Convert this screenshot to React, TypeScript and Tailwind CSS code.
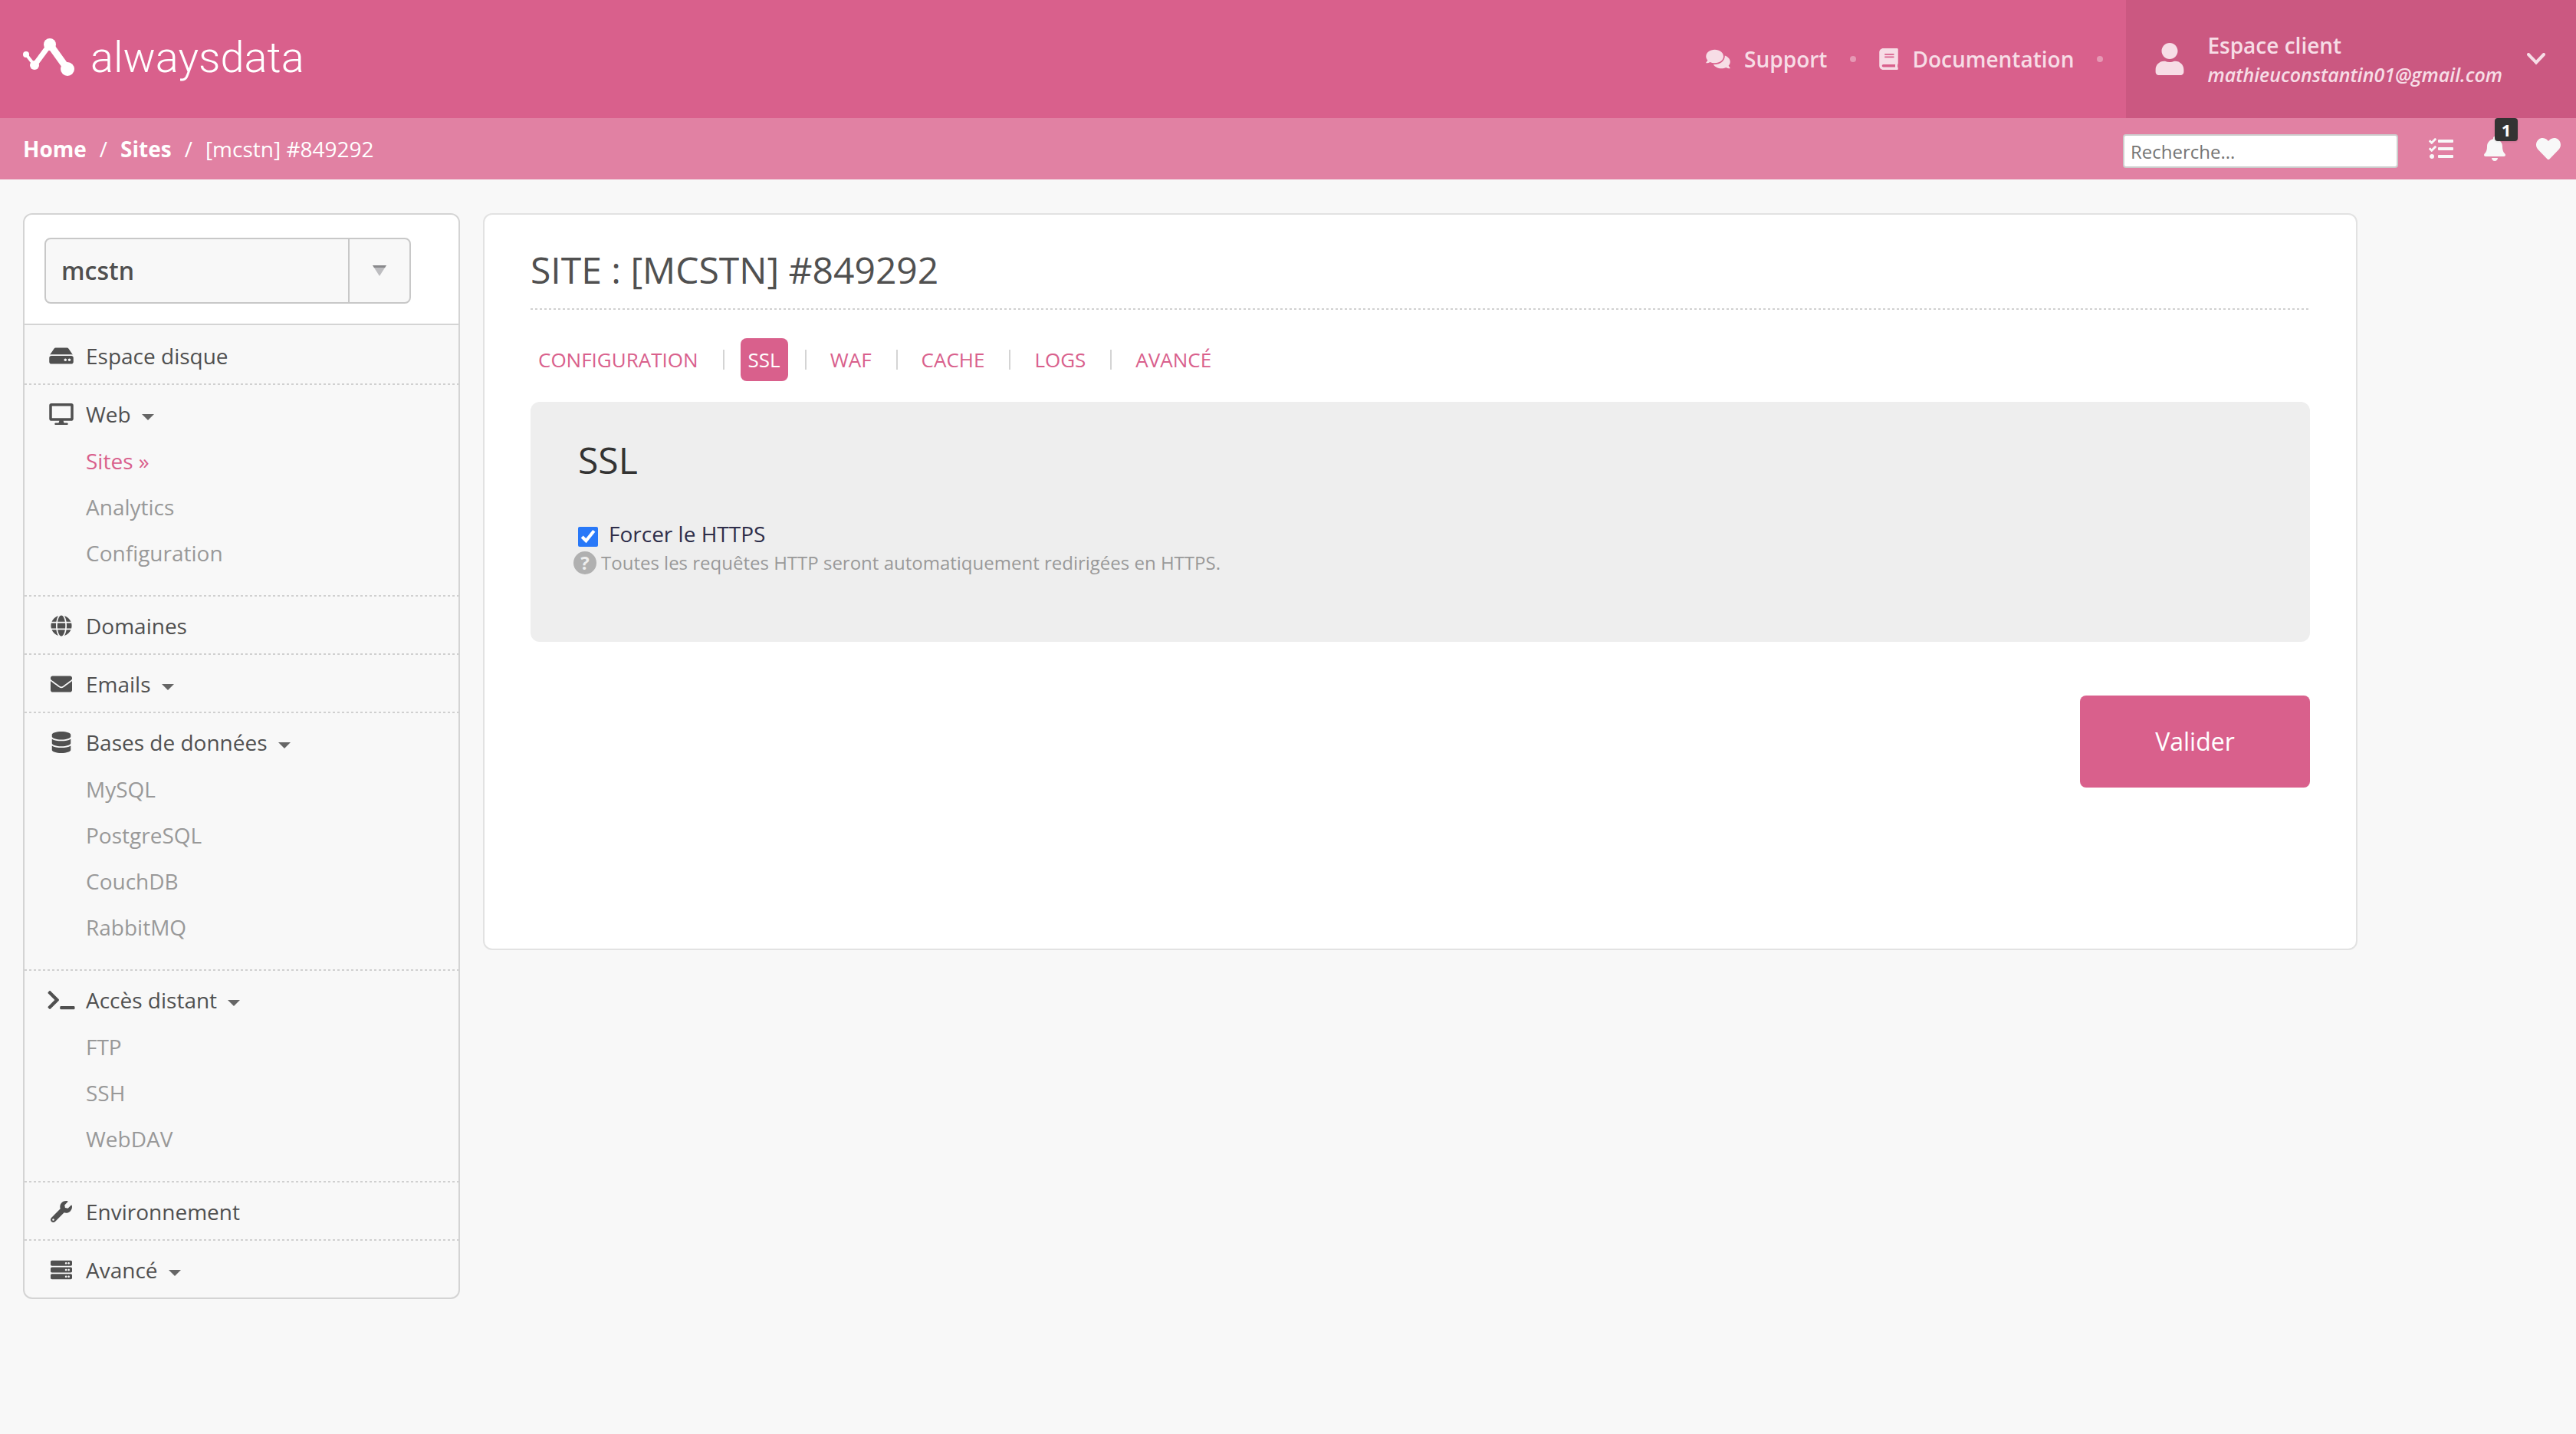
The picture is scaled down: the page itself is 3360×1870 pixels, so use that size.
import React from 'react';
import type { IconType } from 'react-icons';
import {
  FaBell, FaBook, FaComments, FaDatabase, FaDesktop, FaEnvelope, FaGlobe, FaHdd,
  FaHeart, FaServer, FaTasks, FaTerminal, FaUser, FaWrench,
} from 'react-icons/fa';

type Section = { label: string; icon: IconType; caret?: boolean; items?: string[]; active?: string };

const sections: Section[] = [
  { label: 'Espace disque', icon: FaHdd },
  { label: 'Web', icon: FaDesktop, caret: true, items: ['Sites', 'Analytics', 'Configuration'], active: 'Sites' },
  { label: 'Domaines', icon: FaGlobe },
  { label: 'Emails', icon: FaEnvelope, caret: true },
  { label: 'Bases de données', icon: FaDatabase, caret: true, items: ['MySQL', 'PostgreSQL', 'CouchDB', 'RabbitMQ'] },
  { label: 'Accès distant', icon: FaTerminal, caret: true, items: ['FTP', 'SSH', 'WebDAV'] },
  { label: 'Environnement', icon: FaWrench },
  { label: 'Avancé', icon: FaServer, caret: true },
];

const tabs = ['Configuration', 'SSL', 'WAF', 'Cache', 'Logs', 'Avancé'];

function DottedLine() {
  return <div className="h-0.5 bg-[repeating-linear-gradient(to_right,#d0d0d0_0_3px,transparent_3px_6px)]" />;
}

function Logo() {
  return (
    <a href="#" aria-label="alwaysdata" className="flex items-center gap-5 text-white">
      <svg width="68" height="50" viewBox="0 0 68 50" fill="currentColor" stroke="currentColor">
        <path d="M4 21 15 35" fill="none" strokeWidth="4" />
        <path d="M15 35 35 8" fill="none" strokeWidth="7" />
        <path d="M35 8 58 40" fill="none" strokeWidth="9" />
        <g stroke="none">
          <circle cx="4" cy="21" r="4" />
          <circle cx="15" cy="35" r="6" />
          <circle cx="35" cy="8" r="8" />
          <circle cx="58" cy="40" r="9" />
        </g>
      </svg>
      <span className="font-['Roboto',sans-serif] text-[56px] leading-[60px] font-light">alwaysdata</span>
    </a>
  );
}

function Header() {
  return (
    <header className="flex h-[154px] justify-between bg-[#d9608c] pl-[30px] text-[28px] text-[#f7dde6]">
      <div className="flex items-center pb-1">
        <Logo />
      </div>
      <div className="flex">
        <nav className="flex items-center pr-[30px] font-semibold">
          <a href="#" className="flex items-center gap-[18px]"><FaComments className="w-8" />Support</a>
          <span className="mx-[30px] size-2 rounded-full bg-[#e698b4]" />
          <a href="#" className="flex items-center gap-[18px]"><FaBook className="w-[25px]" />Documentation</a>
          <span className="ml-[30px] size-2 rounded-full bg-[#e698b4]" />
        </nav>
        <button type="button" className="flex items-center bg-[#cb5881] pr-10 pl-9 text-left">
          <FaUser className="size-[42px]" />
          <span className="ml-7 flex flex-col pt-0.5">
            <span className="leading-[38px] font-semibold">Espace client</span>
            <span className="text-[25px] leading-[38px] font-semibold italic">mathieuconstantin01@gmail.com</span>
          </span>
          <svg className="ml-8" width="24" height="16" viewBox="0 0 24 16" fill="none" stroke="currentColor" strokeWidth="4" strokeLinecap="round">
            <path d="M2 2 12 12.500 22 2" />
          </svg>
        </button>
      </div>
    </header>
  );
}

function SubBar() {
  return (
    <div className="flex h-20 items-center justify-between bg-[#e181a3] pr-5 pl-[30px] text-[28px] text-white">
      <nav className="flex items-center gap-[17px]">
        <a href="#" className="font-bold">Home</a>
        <span>/</span>
        <a href="#" className="font-bold">Sites</a>
        <span>/</span>
        <span>[mcstn] #849292</span>
      </nav>
      <div className="flex items-center text-[28px] text-[#f8f8f8]">
        <input
          type="search"
          aria-label="Recherche"
          placeholder="Recherche..."
          className="mt-1.5 mr-10 h-11 w-[359px] rounded border-2 border-[#ccc] bg-white px-2 text-[24px] text-[#333] placeholder:text-[#757575]"
        />
        <button type="button" aria-label="Tâches"><FaTasks className="size-8" /></button>
        <button type="button" aria-label="Notifications" className="relative ml-10">
          <FaBell className="h-8 w-7" />
          <span className="absolute -top-6 left-3.5 flex size-[30px] items-center justify-center rounded bg-[#333] text-[22px] leading-none font-bold text-white shadow">1</span>
        </button>
        <button type="button" aria-label="Favoris" className="ml-10"><FaHeart className="size-8" /></button>
      </div>
    </div>
  );
}

function Sidebar() {
  return (
    <aside className="w-[570px] shrink-0 overflow-hidden rounded-xl border-2 border-[#d4d4d4] text-[28px] text-[#505050]">
      <div className="border-b-2 border-[#d4d4d4] bg-white pt-[30px] pr-[62px] pb-[26px] pl-[26px]">
        <button type="button" className="flex h-[86px] w-full items-stretch rounded-lg border-2 border-[#c8c8c8] bg-[#f8f8f8] text-left">
          <span className="flex flex-1 items-center pl-5 text-[32px] font-semibold">mcstn</span>
          <span className="flex w-20 items-center justify-center border-l-2 border-[#c8c8c8]">
            <svg width="18" height="14" viewBox="0 0 18 14">
              <path d="M0 0H18L9 14Z" fill="#bdbdc0" />
              <path d="M0 0H18L16 3H2Z" fill="#89898c" />
            </svg>
          </span>
        </button>
      </div>
      <ul className="pt-0.5">
        {sections.map(({ label, icon: Icon, caret, items, active }, i) => (
          <li key={label}>
            <a href="#" className="flex h-[74px] items-center pt-0.5 pl-[30px]">
              <Icon className="h-7 w-9" />
              <span className="ml-3.5">{label}</span>
              {caret && (
                <svg className="mt-2 ml-3.5" width="16" height="8" viewBox="0 0 16 8" fill="#666">
                  <path d="M0 0H16L8 8Z" />
                </svg>
              )}
            </a>
            {items && (
              <ul className="pb-5 pl-20 text-[#999]">
                {items.map((item) => (
                  <li key={item} className="mb-2.5">
                    <a href="#" className={item === active ? 'block leading-[50px] text-[#d9608c]' : 'block leading-[50px]'}>
                      {item === active ? `${item} »` : item}
                    </a>
                  </li>
                ))}
              </ul>
            )}
            {i < sections.length - 1 && <DottedLine />}
          </li>
        ))}
      </ul>
    </aside>
  );
}

function Content() {
  return (
    <main className="max-w-[2445px] flex-1 rounded-xl border-2 border-[#e2e2e2] bg-white px-[60px] pt-10 pb-[210px]">
      <h1 className="mb-[18px] text-[48px] leading-[64px] text-[#505050] uppercase">Site : [mcstn] #849292</h1>
      <DottedLine />
      <nav className="mt-[37px] flex items-center text-[26px] text-[#d9608c] uppercase">
        {tabs.map((tab, i) => (
          <React.Fragment key={tab}>
            {i > 0 && <span className="mr-[21px] ml-[22px] h-[26px] w-0.5 bg-[#d4d4d4]" />}
            <a href="#" className={tab === 'SSL' ? 'rounded-lg bg-[#d9608c] px-2.5 leading-[56px] text-white' : 'px-2.5 leading-[56px]'}>{tab}</a>
          </React.Fragment>
        ))}
      </nav>
      <form onSubmit={(e) => e.preventDefault()}>
        <section className="mt-[27px] rounded-xl bg-[#eee] px-[62px] pt-[44px] pb-[85px]">
          <h2 className="text-[48px] leading-[64px] text-[#333]">SSL</h2>
          <div className="mt-11 flex items-center">
            <input id="force-https" type="checkbox" defaultChecked className="mt-2 size-[26px] accent-[#2878f8]" />
            <label htmlFor="force-https" className="ml-3.5 text-[28px] leading-[40px] text-[#2e2e4a]">Forcer le HTTPS</label>
          </div>
          <p className="-ml-1.5 flex items-center gap-1.5 text-[24px] leading-[36px] text-[#999]">
            <span className="flex size-[30px] items-center justify-center rounded-full bg-[#b0b0b0] text-[24px] leading-none font-bold text-[#eee]">?</span>
            Toutes les requêtes HTTP seront automatiquement redirigées en HTTPS.
          </p>
        </section>
        <div className="mt-[70px] flex justify-end">
          <button type="submit" className="h-[120px] w-[300px] rounded-lg bg-[#d9608c] text-[32px] text-white">Valider</button>
        </div>
      </form>
    </main>
  );
}

export default function App() {
  return (
    <div className="min-h-screen bg-[#f8f8f8] font-['Open_Sans',sans-serif]">
      <Header />
      <SubBar />
      <div className="flex items-start gap-[30px] px-[30px] pt-11 pb-11">
        <Sidebar />
        <Content />
      </div>
    </div>
  );
}
